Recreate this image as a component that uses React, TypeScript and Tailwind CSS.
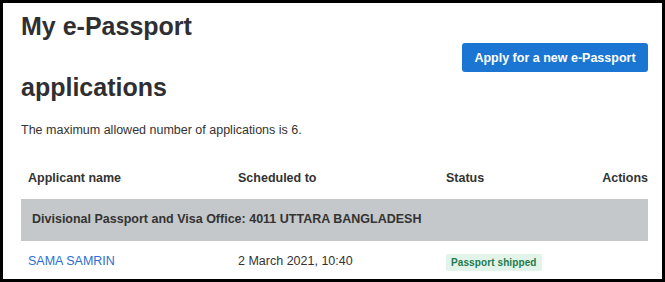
const COLUMNS = ['Applicant name', 'Scheduled to', 'Status', 'Actions'];

interface Application {
  name: string;
  scheduled: string;
  status: string;
}

const OFFICE = 'Divisional Passport and Visa Office: 4011 UTTARA BANGLADESH';

const APPLICATIONS: Application[] = [
  { name: 'SAMA SAMRIN', scheduled: '2 March 2021, 10:40', status: 'Passport shipped' },
];

export default function App() {
  return (
    <div
      className="w-[665px] h-[282px] overflow-hidden border-[3px] border-black bg-white pl-[18px] pr-[14px] text-[#333] text-[12.5px] leading-[18px]"
      style={{ fontFamily: '"Liberation Sans", Arial, sans-serif' }}
    >
      <div className="flex items-start justify-between -mt-[7px]">
        <h1 className="w-[300px] text-[25px] font-bold leading-[61px] text-[#2f2f33]">
          My e-Passport applications
        </h1>
        <button className="mt-[47px] flex h-[29px] w-[186px] items-center justify-center rounded-[3px] bg-[#1b76d3] px-[12px] font-bold text-white">
          Apply for a new e-Passport
        </button>
      </div>

      <p className="mt-[3px]">The maximum allowed number of applications is 6.</p>

      <div className="mt-[18px] grid grid-cols-[210px_208px_1fr_auto]">
        {COLUMNS.map((col, i) => (
          <div
            key={col}
            className={`flex h-[42px] items-center font-bold ${i === 3 ? 'justify-end' : 'pl-[7px]'}`}
          >
            {col}
          </div>
        ))}

        <div className="col-span-4 flex h-[42px] items-center bg-[#c4c8ca] pl-[11px] pb-[2px] font-bold">
          {OFFICE}
        </div>

        {APPLICATIONS.map(app => (
          <div key={app.name} className="contents">
            <div className="flex h-[40px] items-center pl-[7px] text-[#2c6fd0]">{app.name}</div>
            <div className="flex h-[40px] items-center pl-[7px]">{app.scheduled}</div>
            <div className="flex h-[40px] items-center pl-[7px] pt-[3px]">
              <span className="flex h-[17px] items-center rounded-[2px] bg-[#e2f3ea] px-[5px] text-[10px] font-bold tracking-[0.1px] text-[#1f7a4c]">
                {app.status}
              </span>
            </div>
            <div />
          </div>
        ))}
      </div>
    </div>
  );
}
